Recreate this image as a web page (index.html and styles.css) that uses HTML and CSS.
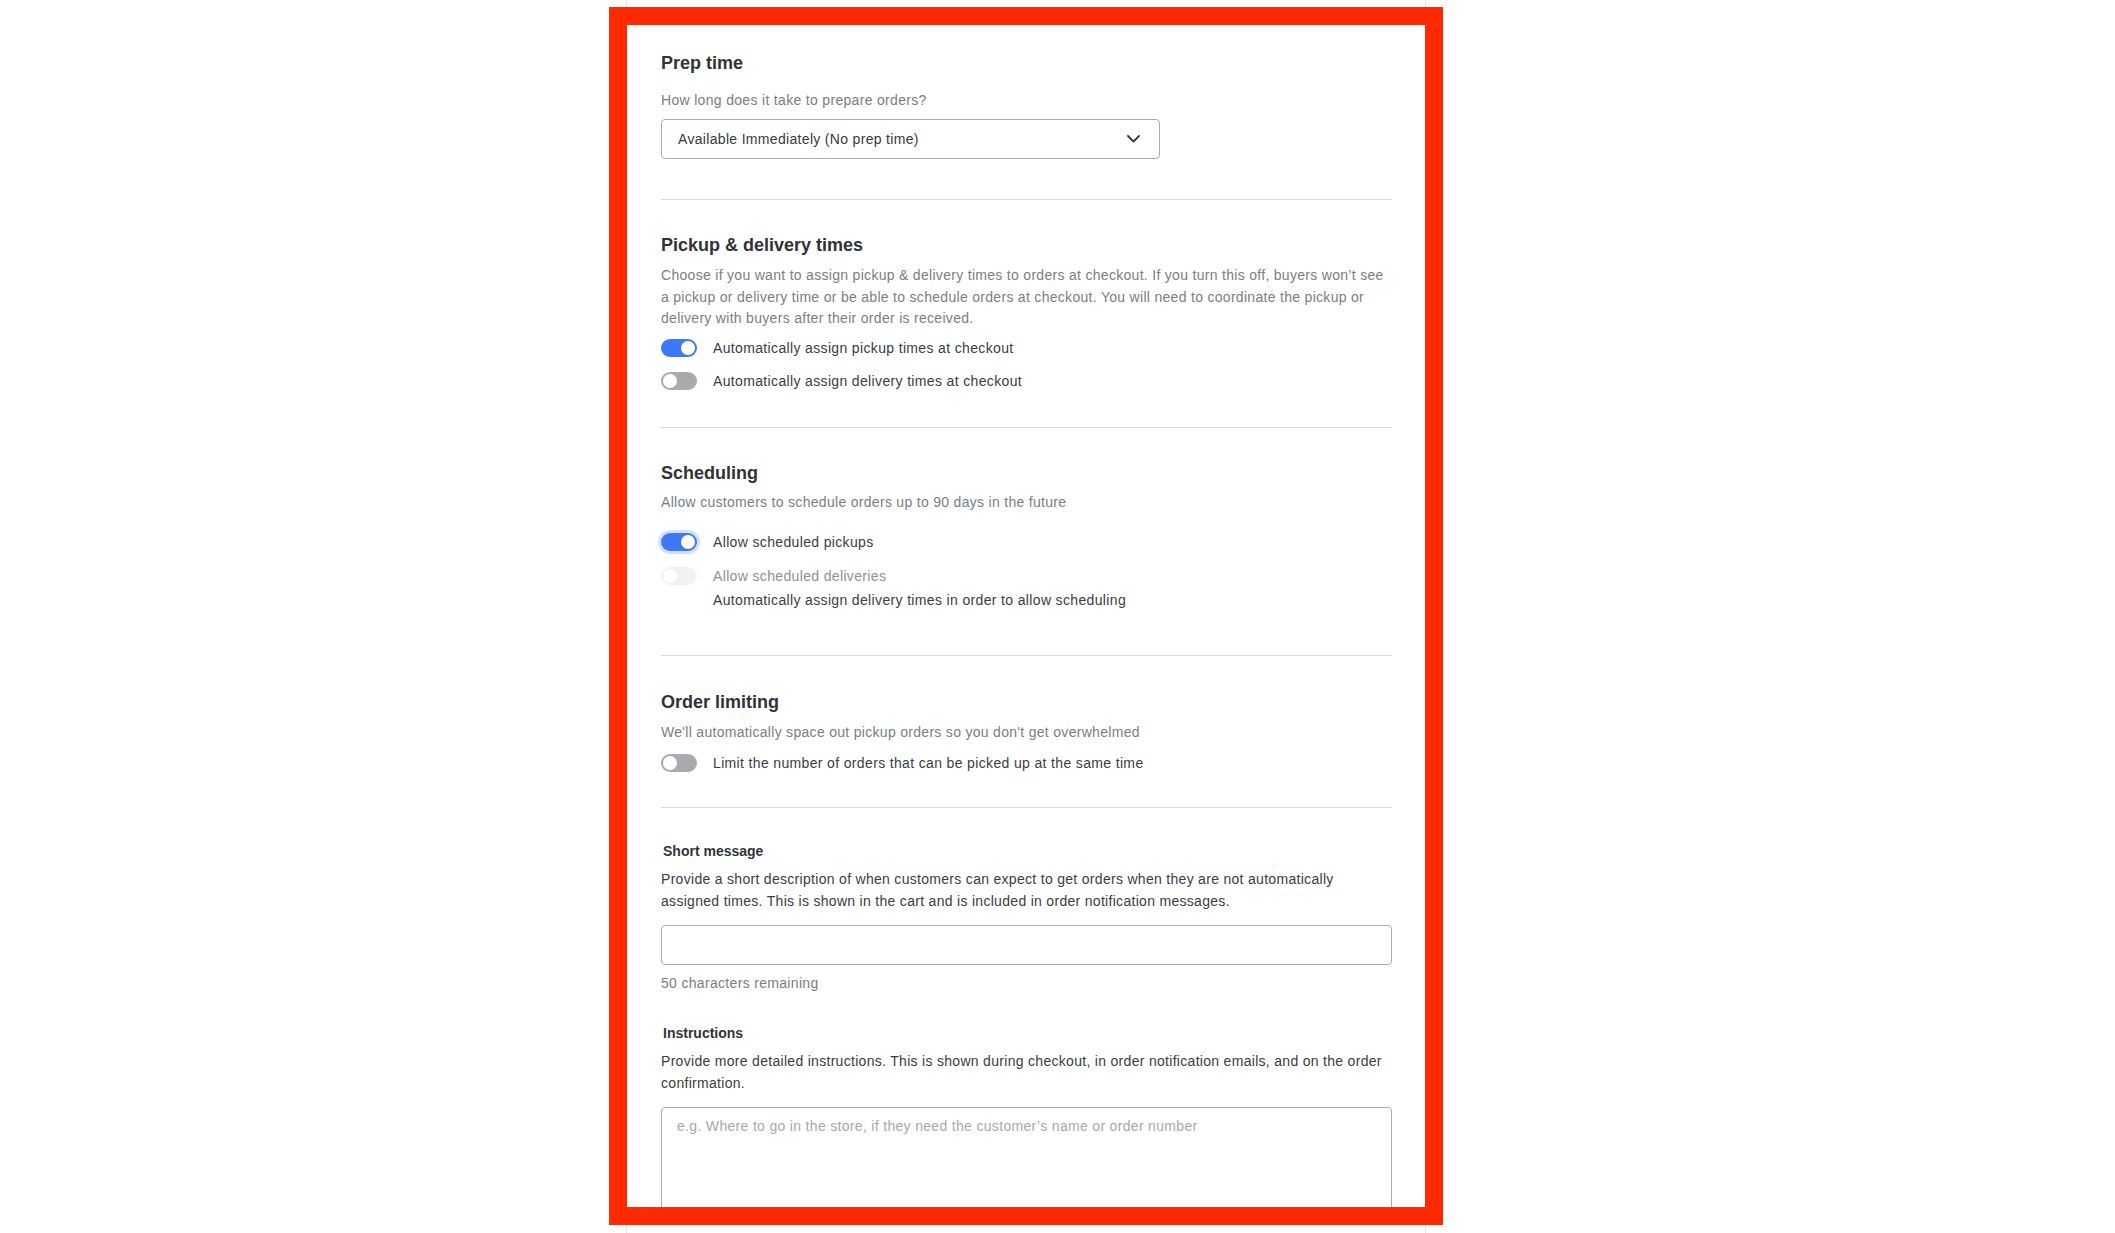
FILE: index.html
```html
<!DOCTYPE html>
<html lang="en">
<head>
<meta charset="utf-8">
<title>Fulfillment settings</title>
<link rel="stylesheet" href="styles.css">
</head>
<body>
<div class="page">
  <main class="card">
    <section class="section section--first">
      <h2 class="section-title">Prep time</h2>
      <p class="prep-desc">How long does it take to prepare orders?</p>
      <div class="select">
        <span class="select-value">Available Immediately (No prep time)</span>
        <svg class="chevron" width="13" height="8" viewBox="0 0 13 8"><polyline points="1,1 6.5,6.5 12,1" fill="none" stroke="#35383c" stroke-width="1.8" stroke-linecap="round" stroke-linejoin="round"/></svg>
      </div>
    </section>
    <hr class="divider divider--1">

    <section class="section">
      <h2 class="section-title">Pickup &amp; delivery times</h2>
      <p class="section-desc">Choose if you want to assign pickup &amp; delivery times to orders at checkout. If you turn this off, buyers won’t see a pickup or delivery time or be able to schedule orders at checkout. You will need to coordinate the pickup or delivery with buyers after their order is received.</p>
      <div class="toggle-row row-a">
        <span class="toggle toggle--on"><span class="knob"></span></span>
        <span class="toggle-label">Automatically assign pickup times at checkout</span>
      </div>
      <div class="toggle-row row-b">
        <span class="toggle toggle--off"><span class="knob"></span></span>
        <span class="toggle-label">Automatically assign delivery times at checkout</span>
      </div>
    </section>
    <hr class="divider divider--2">

    <section class="section">
      <h2 class="section-title">Scheduling</h2>
      <p class="section-desc section-desc--sched">Allow customers to schedule orders up to 90 days in the future</p>
      <div class="toggle-row row-c">
        <span class="toggle toggle--on toggle--focus"><span class="knob"></span></span>
        <span class="toggle-label">Allow scheduled pickups</span>
      </div>
      <div class="toggle-row row-d">
        <span class="toggle toggle--disabled"><span class="knob"></span></span>
        <span class="toggle-label toggle-label--disabled">Allow scheduled deliveries</span>
      </div>
      <p class="helper">Automatically assign delivery times in order to allow scheduling</p>
    </section>
    <hr class="divider divider--3">

    <section class="section section--limit">
      <h2 class="section-title">Order limiting</h2>
      <p class="section-desc section-desc--ol">We'll automatically space out pickup orders so you don't get overwhelmed</p>
      <div class="toggle-row row-e">
        <span class="toggle toggle--off"><span class="knob"></span></span>
        <span class="toggle-label">Limit the number of orders that can be picked up at the same time</span>
      </div>
    </section>
    <hr class="divider divider--4">

    <section class="section section--fields">
      <label class="field-label">Short message</label>
      <p class="field-desc">Provide a short description of when customers can expect to get orders when they are not automatically assigned times. This is shown in the cart and is included in order notification messages.</p>
      <div class="text-input"></div>
      <p class="counter">50 characters remaining</p>

      <label class="field-label field-label--second">Instructions</label>
      <p class="field-desc">Provide more detailed instructions. This is shown during checkout, in order notification emails, and on the order confirmation.</p>
      <div class="textarea"><span class="placeholder">e.g. Where to go in the store, if they need the customer’s name or order number</span></div>
    </section>
  </main>
  <div class="highlight"></div>
</div>
</body>
</html>
```

FILE: styles.css
```css
html, body {
  margin: 0;
  padding: 0;
  height: 100%;
  overflow: hidden;
  background: #ffffff;
}

body {
  font-family: "Liberation Sans", Arial, sans-serif;
  font-size: 14px;
  letter-spacing: 0.32px;
  color: #3a3d41;
}

.page {
  position: relative;
  height: 1233px;
}

.card {
  box-sizing: border-box;
  width: 800px;
  height: 1233px;
  margin-left: 626px;
  padding: 51px 33px 0 34px;
  border-left: 1px solid #e4e4e4;
  border-right: 1px solid #e4e4e4;
  background: #ffffff;
}

.section {
  margin-top: 32.5px;
}

.section--first {
  margin-top: 0;
}

.section--limit {
  margin-top: 34px;
}

.section-title {
  margin: 0;
  font-size: 18px;
  line-height: 24px;
  font-weight: 700;
  color: #2f3337;
  letter-spacing: 0;
}

.prep-desc {
  margin: 15px 0 0;
  line-height: 20px;
  color: #7a7e83;
}

.select {
  box-sizing: border-box;
  width: 499px;
  height: 40px;
  margin-top: 9px;
  padding: 0 19px 0 16px;
  border: 1px solid #a9abae;
  border-radius: 4px;
  display: flex;
  align-items: center;
  justify-content: space-between;
}

.select-value {
  color: #36393d;
  line-height: 20px;
}

.divider {
  border: 0;
  height: 1px;
  background: #dcdddf;
  margin: 0;
}

.divider--1 { margin-top: 40px; }
.divider--2 { margin-top: 34.7px; }
.divider--3 { margin-top: 45.5px; }
.divider--4 { margin-top: 32.5px; }

.section-desc {
  margin: 8.5px 0 0;
  line-height: 21.5px;
  color: #7a7e83;
  letter-spacing: 0.3px;
}

.section-desc--sched {
  margin-top: 7.5px;
}

.section-desc--ol {
  margin-top: 8px;
}

.toggle-row {
  display: flex;
  align-items: center;
  gap: 16px;
  height: 24px;
}

.row-a { margin-top: 6px; }
.row-b { margin-top: 9px; }
.row-c { margin-top: 16px; }
.row-d { margin-top: 10px; }
.row-e { margin-top: 7px; }

.toggle {
  position: relative;
  box-sizing: border-box;
  width: 36px;
  height: 18px;
  border-radius: 9px;
  flex: none;
}

.knob {
  position: absolute;
  top: 2px;
  width: 14px;
  height: 14px;
  border-radius: 50%;
  background: #ffffff;
}

.toggle--on {
  background: #3d78f6;
}

.toggle--on .knob {
  right: 2px;
}

.toggle--off {
  background: #a8aaad;
}

.toggle--off .knob,
.toggle--disabled .knob {
  left: 2px;
}

.toggle--focus {
  box-shadow: 0 0 0 3px #d3e1fd;
}

.toggle--disabled {
  background: #f1f2f4;
}

.toggle-label {
  color: #3a3d41;
  line-height: 20px;
  letter-spacing: 0.35px;
}

.toggle-label--disabled {
  color: #8d9094;
}

.helper {
  margin: 2px 0 0 52px;
  line-height: 20px;
  color: #3a3d41;
  letter-spacing: 0.35px;
}

.section--fields {
  margin-top: 32.5px;
}

.field-label {
  display: block;
  padding-left: 2px;
  font-size: 14px;
  font-weight: 700;
  line-height: 20px;
  color: #303438;
  letter-spacing: 0;
}

.field-label--second {
  margin-top: 30px;
}

.field-desc {
  margin: 7px 0 0;
  line-height: 22px;
  color: #3a3d41;
  letter-spacing: 0.3px;
}

.text-input {
  box-sizing: border-box;
  height: 40px;
  margin-top: 13px;
  border: 1px solid #a9abae;
  border-radius: 4px;
}

.counter {
  margin: 8px 0 0;
  line-height: 20px;
  color: #7a7e83;
}

.textarea {
  box-sizing: border-box;
  height: 112px;
  margin-top: 13px;
  padding: 8px 15px;
  border: 1px solid #a9abae;
  border-radius: 4px;
  line-height: 20px;
}

.placeholder {
  color: #a6a9ad;
}

.highlight {
  position: absolute;
  left: 609px;
  top: 7px;
  width: 834px;
  height: 1218px;
  box-sizing: border-box;
  border: 18px solid #ff2a00;
  pointer-events: none;
}
```
